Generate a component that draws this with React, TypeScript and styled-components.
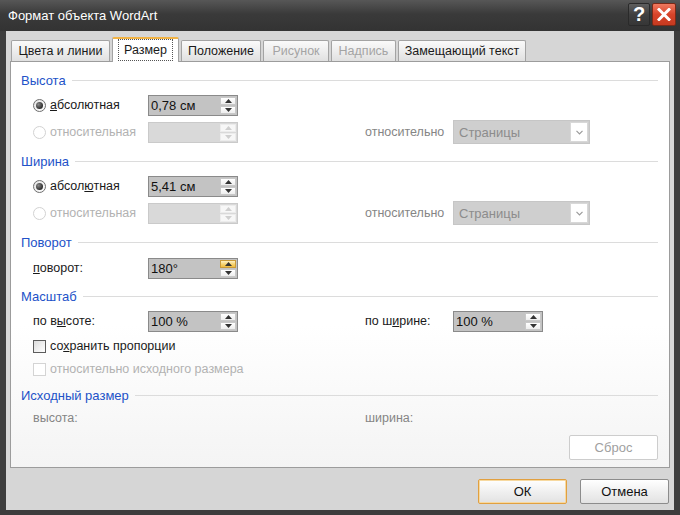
import React from 'react';
import styled, { createGlobalStyle, css } from 'styled-components';

const GlobalStyle = createGlobalStyle`
  html, body { margin: 0; padding: 0; width: 680px; height: 515px; overflow: hidden; }
  body { font-family: "Liberation Sans", Arial, sans-serif; font-size: 12.5px; color: #1a1a1a; }
  * { box-sizing: border-box; }
`;

const Window = styled.div`
  width: 680px;
  height: 515px;
  background: #3d3d3d;
  display: flex;
  flex-direction: column;
`;

const TitleBar = styled.div`
  height: 31px;
  flex: none;
  display: flex;
  align-items: flex-start;
  padding: 0 4px 0 8px;
  background: linear-gradient(#575757 0%, #3a3a3a 45%, #333 100%);
`;

const TitleText = styled.div`
  color: #fff;
  font-size: 13px;
  line-height: 31px;
  flex: 1;
`;

const CaptionButtons = styled.div`
  display: flex;
  gap: 2px;
  margin-top: 3px;
`;

const CaptionButton = styled.div<{ $close?: boolean }>`
  width: ${(p) => (p.$close ? 24 : 22)}px;
  height: 23px;
  display: flex;
  align-items: center;
  justify-content: center;
  border-radius: 2px;
  color: #fff;
  font-weight: bold;
  font-size: 20px;
  ${(p) =>
    p.$close
      ? css`
          background: linear-gradient(#f07a60, #d8442a 50%, #c63a20);
          border: 1px solid #7c2a18;
        `
      : css`
          background: linear-gradient(#5e5e5e, #404040 50%, #363636);
          border: 1px solid #2a2a2a;
        `}
`;

const Body = styled.div`
  flex: 1;
  margin: 0 6px 5px 6px;
  background: #d6d6d6;
  display: flex;
  flex-direction: column;
`;

const TabStrip = styled.div`
  height: 24px;
  margin-top: 6px;
  padding-left: 5px;
  display: flex;
  align-items: flex-end;
  gap: 2px;
  flex: none;
`;

const Tab = styled.div<{ $w: number; $active?: boolean; $disabled?: boolean }>`
  width: ${(p) => p.$w}px;
  height: 21px;
  display: flex;
  align-items: center;
  justify-content: center;
  border: 1px solid #a3a3a3;
  border-bottom: none;
  border-radius: 2px 2px 0 0;
  background: linear-gradient(#fafafa, #ebebeb 60%, #e0e0e0);
  color: ${(p) => (p.$disabled ? '#a4a4a4' : '#1a1a1a')};
  ${(p) =>
    p.$active &&
    css`
      height: 25px;
      margin-bottom: -1px;
      position: relative;
      z-index: 1;
      background: #fff;
      border-top: 2px solid #f2b446;
      padding-bottom: 2px;
    `}
`;

const Focus = styled.span`
  outline: 1px dotted #555;
  padding: 3px 5px;
`;

const Panel = styled.div`
  flex: none;
  height: 407px;
  margin: 0 4px;
  border: 1px solid #9c9c9c;
  background: linear-gradient(#ffffff 65%, #f4f4f4);
  padding: 9px 11px 0 10px;
  display: flex;
  flex-direction: column;
`;

const Header = styled.div<{ $mt?: number }>`
  height: 18px;
  margin-top: ${(p) => p.$mt ?? 0}px;
  margin-bottom: 3px;
  display: flex;
  align-items: center;
  gap: 6px;
  color: #2252c8;
  font-size: 13px;
  flex: none;
`;

const HeaderLine = styled.div`
  flex: 1;
  height: 1px;
  background: #dcdcdc;
`;

const Row = styled.div<{ $h: number }>`
  height: ${(p) => p.$h}px;
  flex: none;
  display: grid;
  grid-template-columns: 115px 90px 127px 88px 137px;
  align-items: center;
  padding-left: 12px;
`;

const Label = styled.div<{ $disabled?: boolean }>`
  color: ${(p) => (p.$disabled ? '#858585' : '#1a1a1a')};
  white-space: nowrap;
`;

const Choice = styled.div<{ $disabled?: boolean; $span?: boolean }>`
  display: flex;
  align-items: center;
  gap: 4px;
  white-space: nowrap;
  color: ${(p) => (p.$disabled ? '#b2b2b2' : '#1a1a1a')};
  ${(p) => p.$span && css`grid-column: 1 / span 4;`}
`;

const RadioCircle = styled.span<{ $checked?: boolean; $disabled?: boolean }>`
  width: 13px;
  height: 13px;
  border-radius: 50%;
  flex: none;
  display: flex;
  align-items: center;
  justify-content: center;
  border: 1px solid ${(p) => (p.$disabled ? '#d2d2d2' : '#6e6e6e')};
  background: ${(p) => (p.$disabled ? '#fff' : 'linear-gradient(135deg, #e4e4e4, #ffffff)')};
  &::after {
    content: '';
    display: ${(p) => (p.$checked ? 'block' : 'none')};
    width: 7px;
    height: 7px;
    border-radius: 50%;
    background: radial-gradient(circle at 35% 35%, #8a8a8a, #2e2e2e 70%);
  }
`;

const CheckBox = styled.span<{ $disabled?: boolean }>`
  width: 13px;
  height: 13px;
  flex: none;
  border: 1px solid ${(p) => (p.$disabled ? '#d4d4d4' : '#5c5c5c')};
  background: ${(p) => (p.$disabled ? '#fff' : 'linear-gradient(135deg, #dcdcdc, #ffffff)')};
`;

const Spin = styled.div<{ $disabled?: boolean }>`
  width: 90px;
  height: 21px;
  display: flex;
  border: 1px solid ${(p) => (p.$disabled ? '#cacaca' : '#8a8a8a')};
  background: ${(p) => (p.$disabled ? '#d9d9d9' : '#c3c3c3')};
`;

const SpinValue = styled.div`
  flex: 1;
  padding-left: 2px;
  display: flex;
  align-items: center;
  font-size: 13px;
  color: #111;
`;

const SpinButtons = styled.div`
  width: 18px;
  display: flex;
  flex-direction: column;
  gap: 1px;
  padding: 1px;
`;

const SpinButton = styled.div<{ $hot?: boolean; $disabled?: boolean }>`
  flex: 1;
  display: flex;
  align-items: center;
  justify-content: center;
  border: 1px solid ${(p) => (p.$hot ? '#c99a3a' : p.$disabled ? '#ececec' : '#c8c8c8')};
  background: ${(p) =>
    p.$hot
      ? 'linear-gradient(#fdf0c4, #f6d26e 55%, #efbc40)'
      : p.$disabled
      ? '#f7f7f7'
      : 'linear-gradient(#ffffff, #eeeeee)'};
`;

const Combo = styled.div`
  width: 137px;
  height: 24px;
  display: flex;
  border: 1px solid #c6c6c6;
  background: #cfcfcf;
  padding: 1px;
`;

const ComboValue = styled.div`
  flex: 1;
  display: flex;
  align-items: center;
  padding-left: 4px;
  color: #8c8c8c;
  font-size: 13px;
`;

const ComboButton = styled.div`
  width: 18px;
  display: flex;
  align-items: center;
  justify-content: center;
  background: #fff;
  border: 1px solid #d8d8d8;
`;

const ButtonRow = styled.div`
  margin-top: 6px;
  display: flex;
  justify-content: flex-end;
`;

const PushButton = styled.div<{ $variant?: 'default' | 'disabled' }>`
  width: 89px;
  height: 25px;
  display: flex;
  align-items: center;
  justify-content: center;
  font-size: 13px;
  border-radius: 2px;
  border: 1px solid #8c8c8c;
  background: linear-gradient(#ffffff, #f0f0f0 50%, #e2e2e2);
  color: #111;
  ${(p) =>
    p.$variant === 'default' &&
    css`
      border-color: #e1a040;
      box-shadow: inset 0 0 0 1px #f7d9a0;
    `}
  ${(p) =>
    p.$variant === 'disabled' &&
    css`
      border-color: #cdcdcd;
      background: #fff;
      color: #a0a0a0;
    `}
`;

const Footer = styled.div`
  flex: 1;
  display: flex;
  justify-content: flex-end;
  align-items: flex-start;
  gap: 13px;
  padding: 11px 5px 0 0;
`;

const Arrow = ({ up, color }: { up?: boolean; color: string }) => (
  <svg width="7" height="4" viewBox="0 0 7 4">
    <polygon points={up ? '0,4 3.5,0 7,4' : '0,0 3.5,4 7,0'} fill={color} />
  </svg>
);

const SpinBox = ({ value, disabled, hot }: { value?: string; disabled?: boolean; hot?: boolean }) => (
  <Spin $disabled={disabled}>
    <SpinValue>{value}</SpinValue>
    <SpinButtons>
      <SpinButton $hot={hot} $disabled={disabled}>
        <Arrow up color={disabled ? '#cfcfcf' : '#333'} />
      </SpinButton>
      <SpinButton $disabled={disabled}>
        <Arrow color={disabled ? '#cfcfcf' : '#333'} />
      </SpinButton>
    </SpinButtons>
  </Spin>
);

const ComboBox = ({ value }: { value: string }) => (
  <Combo>
    <ComboValue>{value}</ComboValue>
    <ComboButton>
      <svg width="7" height="5" viewBox="0 0 7 5">
        <polyline points="0.5,0.8 3.5,3.8 6.5,0.8" fill="none" stroke="#9a9a9a" strokeWidth="1.2" />
      </svg>
    </ComboButton>
  </Combo>
);

const Section = ({ title, mt }: { title: string; mt?: number }) => (
  <Header $mt={mt}>
    {title}
    <HeaderLine />
  </Header>
);

export default function App() {
  return (
    <>
      <GlobalStyle />
      <Window>
        <TitleBar>
          <TitleText>Формат объекта WordArt</TitleText>
          <CaptionButtons>
            <CaptionButton>?</CaptionButton>
            <CaptionButton $close>
              <svg width="14" height="13" viewBox="0 0 14 13">
                <path d="M2 1.5 L12 11.5 M12 1.5 L2 11.5" stroke="#fff" strokeWidth="3" strokeLinecap="square" />
              </svg>
            </CaptionButton>
          </CaptionButtons>
        </TitleBar>
        <Body>
          <TabStrip>
            <Tab $w={99}>Цвета и линии</Tab>
            <Tab $w={67} $active>
              <Focus>Размер</Focus>
            </Tab>
            <Tab $w={80}>Положение</Tab>
            <Tab $w={66} $disabled>Рисунок</Tab>
            <Tab $w={65} $disabled>Надпись</Tab>
            <Tab $w={128}>Замещающий текст</Tab>
          </TabStrip>
          <Panel>
            <Section title="Высота" />
            <Row $h={26}>
              <Choice>
                <RadioCircle $checked />
                <span>
                  <u>а</u>бсолютная
                </span>
              </Choice>
              <SpinBox value="0,78 см" />
            </Row>
            <Row $h={28}>
              <Choice $disabled>
                <RadioCircle $disabled />
                <span>относительная</span>
              </Choice>
              <SpinBox disabled />
              <span />
              <Label $disabled>относительно</Label>
              <ComboBox value="Страницы" />
            </Row>

            <Section title="Ширина" mt={6} />
            <Row $h={26}>
              <Choice>
                <RadioCircle $checked />
                <span>
                  абсол<u>ю</u>тная
                </span>
              </Choice>
              <SpinBox value="5,41 см" />
            </Row>
            <Row $h={28}>
              <Choice $disabled>
                <RadioCircle $disabled />
                <span>относительная</span>
              </Choice>
              <SpinBox disabled />
              <span />
              <Label $disabled>относительно</Label>
              <ComboBox value="Страницы" />
            </Row>

            <Section title="Поворот" mt={6} />
            <Row $h={28}>
              <Label>
                <u>п</u>оворот:
              </Label>
              <SpinBox value="180°" hot />
            </Row>

            <Section title="Масштаб" mt={5} />
            <Row $h={26}>
              <Label>
                по в<u>ы</u>соте:
              </Label>
              <SpinBox value="100 %" />
              <span />
              <Label>
                по ш<u>и</u>рине:
              </Label>
              <SpinBox value="100 %" />
            </Row>
            <Row $h={24}>
              <Choice $span>
                <CheckBox />
                <span>
                  со<u>х</u>ранить пропорции
                </span>
              </Choice>
            </Row>
            <Row $h={22}>
              <Choice $span $disabled>
                <CheckBox $disabled />
                <span>относительно исходного размера</span>
              </Choice>
            </Row>

            <Section title="Исходный размер" mt={6} />
            <Row $h={22}>
              <Label $disabled>высота:</Label>
              <span />
              <span />
              <Label $disabled>ширина:</Label>
            </Row>
            <ButtonRow>
              <PushButton $variant="disabled">Сброс</PushButton>
            </ButtonRow>
          </Panel>
          <Footer>
            <PushButton $variant="default">ОК</PushButton>
            <PushButton>Отмена</PushButton>
          </Footer>
        </Body>
      </Window>
    </>
  );
}
